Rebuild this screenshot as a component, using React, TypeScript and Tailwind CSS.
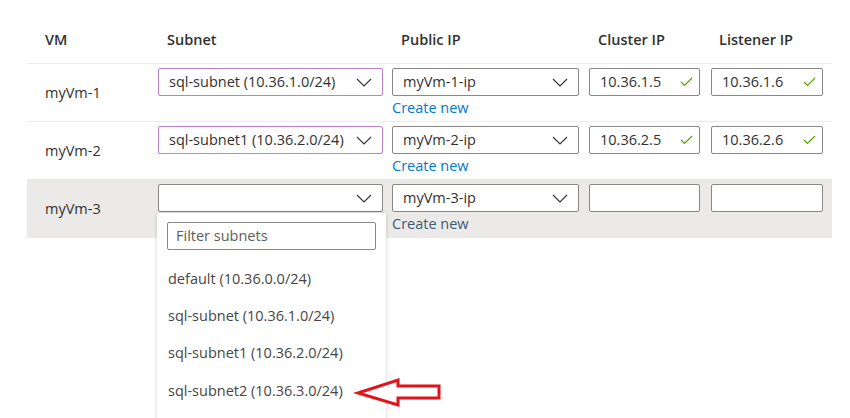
import React from "react";

const rows = [
  { vm: "myVm-1", subnet: "sql-subnet (10.36.1.0/24)", ip: "myVm-1-ip", cluster: "10.36.1.5", listener: "10.36.1.6" },
  { vm: "myVm-2", subnet: "sql-subnet1 (10.36.2.0/24)", ip: "myVm-2-ip", cluster: "10.36.2.5", listener: "10.36.2.6" },
  { vm: "myVm-3", subnet: "", ip: "myVm-3-ip", cluster: "", listener: "" },
];

const subnets = [
  "default (10.36.0.0/24)",
  "sql-subnet (10.36.1.0/24)",
  "sql-subnet1 (10.36.2.0/24)",
  "sql-subnet2 (10.36.3.0/24)",
];

function Chevron() {
  return (
    <svg width="16" height="9" viewBox="0 0 16 9" className="shrink-0">
      <path d="M1 1 L8 8 L15 1" fill="none" stroke="#323130" strokeWidth="1.1" />
    </svg>
  );
}

function Check() {
  return (
    <svg width="13" height="10" viewBox="0 0 13 10" className="shrink-0">
      <path d="M1 5 L4.5 8.5 L12 1" fill="none" stroke="#57a300" strokeWidth="1.2" />
    </svg>
  );
}

function Select({ value, focused, width }: { value: string; focused?: boolean; width: string }) {
  return (
    <div
      className={`${width} h-[28px] flex items-center justify-between pl-[10px] pr-[10px] bg-white border rounded-[2px] ${
        focused ? "border-[#b982cc]" : "border-[#8a8886]"
      }`}
    >
      <span className="truncate">{value}</span>
      <Chevron />
    </div>
  );
}

function IpInput({ value, width }: { value: string; width: string }) {
  return (
    <div className={`${width} h-[28px] flex items-center justify-between pl-[10px] pr-[6px] bg-white border border-[#8a8886] rounded-[2px]`}>
      <span>{value}</span>
      {value && <Check />}
    </div>
  );
}

export default function App() {
  return (
    <div
      className="relative w-[850px] h-[418px] overflow-hidden bg-white text-[14.5px] text-[#323130]"
      style={{ fontFamily: '"Open Sans", "Noto Sans", sans-serif' }}
    >
      <div className="ml-[27px] w-[805px]">
        {/* header */}
        <div className="flex h-[64px] items-end pb-[12px] font-semibold border-b border-[#edebe9]">
          <div className="w-[131px] pl-[18px]">VM</div>
          <div className="w-[234px] pl-[9px]">Subnet</div>
          <div className="w-[197px] pl-[9px]">Public IP</div>
          <div className="w-[122px] pl-[9px]">Cluster IP</div>
          <div className="w-[111px] pl-[8px]">Listener IP</div>
        </div>

        {rows.map((r, i) => (
          <div
            key={r.vm}
            className={`flex h-[58px] pt-[4px] ${i < 2 ? "border-b border-[#edebe9]" : "bg-[#ebeae9]"}`}
          >
            <div className="w-[131px] pl-[18px] pt-[14px]">{r.vm}</div>
            <div className="w-[234px] relative">
              <Select value={r.subnet} focused={i < 2} width="w-[225px]" />
              {i === 2 && (
                <div className="absolute left-[-1px] top-[29px] w-[229px] h-[220px] bg-white shadow-[0_0_4px_rgba(0,0,0,0.18)] z-10 px-[10px] pt-[9px]">
                  <div className="h-[28px] border border-[#8a8886] rounded-[2px] flex items-center pl-[8px] text-[#605e5c]">
                    Filter subnets
                  </div>
                  <div className="flex flex-col pt-[10px] text-[#484644]">
                    {subnets.map((s) => (
                      <div key={s} className="h-[37.3px] flex items-center pl-[1px]">
                        {s}
                      </div>
                    ))}
                  </div>
                </div>
              )}
            </div>
            <div className="w-[197px] flex flex-col">
              <Select value={r.ip} width="w-[187px]" />
              <a className={`mt-[1px] ${i === 2 ? "text-[#3d5a76]" : "text-[#0078d4]"}`}>Create new</a>
            </div>
            <div className="w-[122px]">
              <IpInput value={r.cluster} width="w-[111px]" />
            </div>
            <div className="w-[111px]">
              <IpInput value={r.listener} width="w-[112px]" />
            </div>
          </div>
        ))}
      </div>

      {/* annotation arrow */}
      <svg className="absolute left-[350px] top-[372px] z-20" width="100" height="40" viewBox="350 372 100 40">
        <polygon
          points="358,393 398,380 398,386 439,386 439,398 398,398 398,405"
          fill="white"
          stroke="#e3131b"
          strokeWidth="3"
          strokeLinejoin="miter"
        />
      </svg>
    </div>
  );
}
